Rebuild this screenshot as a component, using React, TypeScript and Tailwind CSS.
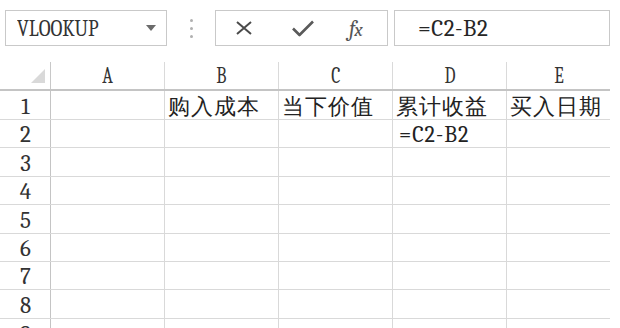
import React from "react";

const cols = ["A", "B", "C", "D", "E"];
const colW = ["w-[114px]", "w-[114px]", "w-[114px]", "w-[114px]", "w-[103px]"];
const rowH = ["h-[29px]", "h-[28px]", "h-[29px]", "h-[28px]", "h-[29px]", "h-[28px]", "h-[28px]", "h-[29px]", "h-[29px]"];

const data: Record<string, string> = {
  "1B": "购入成本",
  "1C": "当下价值",
  "1D": "累计收益",
  "1E": "买入日期",
  "2D": "=C2-B2",
};

const isCjk = (s: string) => /[\u4e00-\u9fff]/.test(s);

export default function App() {
  return (
    <div className="w-[620px] h-[328px] bg-white overflow-hidden text-[#262626] font-serif">
      {/* formula bar */}
      <div className="flex h-[62px] pt-[10px] pl-[5px]">
        <div className="flex items-center w-[162px] h-[36px] border border-[#c9c9c9] pl-[11px] pr-[10px]">
          <span className="inline-block origin-left scale-x-[0.86] text-[23px] leading-none text-[#333]">
            VLOOKUP
          </span>
          <div className="ml-auto">
            <svg width="10" height="6" viewBox="0 0 10 6">
              <path d="M0 0 L10 0 L5 6 Z" fill="#6b6b6b" />
            </svg>
          </div>
        </div>
        <div className="w-[48px] h-[36px] flex flex-col items-center justify-center gap-[5px] pl-[1px]">
          <div className="w-[3px] h-[3px] rounded-full bg-[#b0b0b0]" />
          <div className="w-[3px] h-[3px] rounded-full bg-[#b0b0b0]" />
          <div className="w-[3px] h-[3px] rounded-full bg-[#b0b0b0]" />
        </div>
        <div className="flex items-center w-[173px] h-[36px] border border-[#c9c9c9]">
          <svg className="ml-[19px]" width="18" height="14" viewBox="0 0 18 14">
            <path d="M2 1 L16 13 M16 1 L2 13" stroke="#4a4a4a" strokeWidth="2" fill="none" />
          </svg>
          <svg className="ml-[39px]" width="22" height="17" viewBox="0 0 22 17">
            <path d="M1 8.5 L7.5 15 L21 1.5" stroke="#5a5a5a" strokeWidth="2.6" fill="none" strokeLinejoin="round" />
          </svg>
          <span className="ml-[35px] italic text-[#555] leading-none flex items-end pt-[2px]">
            <span className="text-[22px]">f</span>
            <span className="text-[19px] -ml-[1px]">x</span>
          </span>
        </div>
        <div className="ml-[6px] flex items-center w-[216px] h-[36px] border border-[#c9c9c9] pl-[23px]">
          <span className="text-[23px] leading-none text-[#262626] tracking-[0.5px]">=C2-B2</span>
        </div>
      </div>

      {/* grid */}
      <div className="w-[610px]">
        <div className="flex h-[29px] border-b-[2px] border-[#c4c4c4]">
          <div className="w-[51px] border-r border-[#c8c8c8] flex items-end justify-end pr-[5px] pb-[6px]">
            <svg width="14" height="14" viewBox="0 0 14 14">
              <path d="M14 0 L14 14 L0 14 Z" fill="#d9d9d9" />
            </svg>
          </div>
          {cols.map((c, i) => (
            <div
              key={c}
              className={`${colW[i]} ${i < 4 ? "border-r border-[#dadada]" : ""} flex items-end justify-center pb-[2px]`}
            >
              <span className="inline-block scale-x-[0.8] text-[22px] leading-none text-[#333]">{c}</span>
            </div>
          ))}
        </div>
        {rowH.map((h, r) => {
          const n = r + 1;
          return (
            <div key={n} className={`flex ${h} border-b border-[#d9d9d9]`}>
              <div className="w-[51px] border-r border-[#c4c4c4] flex items-end justify-center pb-[1px] pl-[1px]">
                <span className="text-[23px] leading-none text-[#333]">{n}</span>
              </div>
              {cols.map((c, i) => {
                const v = data[`${n}${c}`];
                return (
                  <div
                    key={c}
                    className={`${colW[i]} ${i < 4 ? "border-r border-[#d9d9d9]" : ""} flex items-end pl-[3px] pb-[1px] overflow-hidden whitespace-nowrap`}
                  >
                    {v ? (
                      isCjk(v) ? (
                        <span className="text-[22px] leading-none text-[#222] tracking-[1px] font-medium">{v}</span>
                      ) : (
                        <span className="text-[22px] leading-none text-[#222] tracking-[1px] pl-[3px]">{v}</span>
                      )
                    ) : null}
                  </div>
                );
              })}
            </div>
          );
        })}
      </div>
    </div>
  );
}
